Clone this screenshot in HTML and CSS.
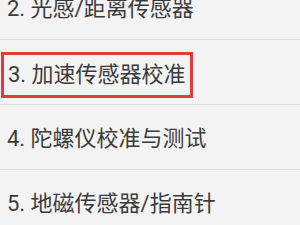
FILE: index.html
```html
<!DOCTYPE html>
<html lang="zh">
<head>
<meta charset="utf-8">
<link rel="stylesheet" href="styles.css">
</head>
<body>
<ul class="menu">
  <li class="item"><span class="label">2. 光感/距离传感器</span></li>
  <li class="item item-marked"><span class="label label-marked">3. 加速传感器校准</span></li>
  <li class="item"><span class="label">4. 陀螺仪校准与测试</span></li>
  <li class="item"><span class="label">5. 地磁传感器/指南针</span></li>
</ul>
</body>
</html>
```
FILE: styles.css
```css
html, body {
  margin: 0;
  padding: 0;
  background: #f3f3f3;
}
body {
  width: 300px;
  height: 225px;
  overflow: hidden;
  font-family: Roboto, "Noto Sans CJK SC", sans-serif;
}
.menu {
  list-style: none;
  margin: -25px 0 0 0;
  padding: 0;
}
.item {
  height: 64px;
  border-bottom: 1px solid #dedede;
  display: flex;
  align-items: center;
  padding-left: 7px;
  box-sizing: content-box;
}
.label {
  font-size: 22px;
  color: #3b3b3b;
  line-height: 1;
  margin-top: 4px;
}
.item-marked {
  padding-left: 1px;
}
.label-marked {
  box-sizing: border-box;
  width: 192px;
  height: 46px;
  border: 3px solid #e5383f;
  padding-left: 4px;
  display: flex;
  align-items: center;
  margin-top: 5px;
}
```
